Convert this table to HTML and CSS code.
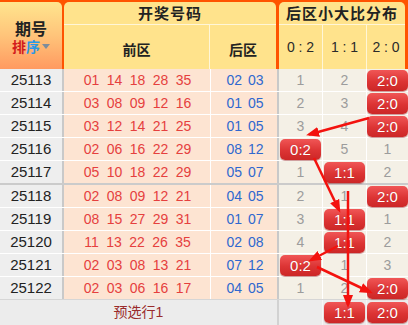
FILE: index.html
```html
<!DOCTYPE html>
<html lang="zh">
<head>
<meta charset="utf-8">
<title>后区小大比分布</title>
<link rel="stylesheet" href="styles.css">
</head>
<body>
<div class="board">
  <div class="head">
    <div class="h-qh">
      <div class="qh-title">期号</div>
      <div class="sort"><span class="s1">排</span><span class="s2">序</span><span class="tri"></span></div>
    </div>
    <div class="h-kj">
      <div class="h-title">开奖号码</div>
      <div class="h-sub">
        <div class="h-qq">前区</div>
        <div class="h-hq">后区</div>
      </div>
    </div>
    <div class="h-fb">
      <div class="h-title">后区小大比分布</div>
      <div class="h-sub">
        <div class="h-c">0 : 2</div>
        <div class="h-c">1 : 1</div>
        <div class="h-c last">2 : 0</div>
      </div>
    </div>
  </div>

  <div class="rows">
    <div class="row">
      <div class="c-qh">25113</div>
      <div class="c-qq"><span>01</span><span>14</span><span>18</span><span>28</span><span>35</span></div>
      <div class="c-hq"><span>02</span><span>03</span></div>
      <div class="c-r">1</div><div class="c-r">2</div><div class="c-r last"><span class="badge">2:0</span></div>
    </div>
    <div class="row">
      <div class="c-qh">25114</div>
      <div class="c-qq"><span>03</span><span>08</span><span>09</span><span>12</span><span>16</span></div>
      <div class="c-hq"><span>01</span><span>05</span></div>
      <div class="c-r">2</div><div class="c-r">3</div><div class="c-r last"><span class="badge">2:0</span></div>
    </div>
    <div class="row">
      <div class="c-qh">25115</div>
      <div class="c-qq"><span>03</span><span>12</span><span>14</span><span>21</span><span>25</span></div>
      <div class="c-hq"><span>01</span><span>05</span></div>
      <div class="c-r">3</div><div class="c-r">4</div><div class="c-r last"><span class="badge">2:0</span></div>
    </div>
    <div class="row">
      <div class="c-qh">25116</div>
      <div class="c-qq"><span>02</span><span>06</span><span>16</span><span>22</span><span>29</span></div>
      <div class="c-hq"><span>08</span><span>12</span></div>
      <div class="c-r"><span class="badge">0:2</span></div><div class="c-r">5</div><div class="c-r last">1</div>
    </div>
    <div class="row sep">
      <div class="c-qh">25117</div>
      <div class="c-qq"><span>05</span><span>10</span><span>18</span><span>22</span><span>29</span></div>
      <div class="c-hq"><span>05</span><span>07</span></div>
      <div class="c-r">1</div><div class="c-r"><span class="badge">1:1</span></div><div class="c-r last">2</div>
    </div>
    <div class="row">
      <div class="c-qh">25118</div>
      <div class="c-qq"><span>02</span><span>08</span><span>09</span><span>12</span><span>21</span></div>
      <div class="c-hq"><span>04</span><span>05</span></div>
      <div class="c-r">2</div><div class="c-r">1</div><div class="c-r last"><span class="badge">2:0</span></div>
    </div>
    <div class="row">
      <div class="c-qh">25119</div>
      <div class="c-qq"><span>08</span><span>15</span><span>27</span><span>29</span><span>31</span></div>
      <div class="c-hq"><span>01</span><span>07</span></div>
      <div class="c-r">3</div><div class="c-r"><span class="badge">1:1</span></div><div class="c-r last">1</div>
    </div>
    <div class="row">
      <div class="c-qh">25120</div>
      <div class="c-qq"><span>11</span><span>13</span><span>22</span><span>26</span><span>35</span></div>
      <div class="c-hq"><span>02</span><span>08</span></div>
      <div class="c-r">4</div><div class="c-r"><span class="badge">1:1</span></div><div class="c-r last">2</div>
    </div>
    <div class="row">
      <div class="c-qh">25121</div>
      <div class="c-qq"><span>02</span><span>03</span><span>08</span><span>13</span><span>21</span></div>
      <div class="c-hq"><span>07</span><span>12</span></div>
      <div class="c-r"><span class="badge">0:2</span></div><div class="c-r">1</div><div class="c-r last">3</div>
    </div>
    <div class="row end">
      <div class="c-qh">25122</div>
      <div class="c-qq"><span>02</span><span>03</span><span>06</span><span>16</span><span>17</span></div>
      <div class="c-hq"><span>04</span><span>05</span></div>
      <div class="c-r">1</div><div class="c-r">2</div><div class="c-r last"><span class="badge">2:0</span></div>
    </div>
  </div>

  <div class="foot">
    <div class="f-label">预选行1</div>
    <div class="f-c"></div>
    <div class="f-c"><span class="badge">1:1</span></div>
    <div class="f-c last"><span class="badge">2:0</span></div>
  </div>

  <svg class="arrows" width="408" height="325" viewBox="0 0 408 325">
    <defs>
      <marker id="ah" viewBox="0 0 13 10" refX="10" refY="5" markerWidth="13" markerHeight="10" markerUnits="userSpaceOnUse" orient="auto">
        <path d="M0,0 L13,5 L0,10 Z" fill="#f3120e"/>
      </marker>
    </defs>
    <g stroke="#f3120e" stroke-width="2.5" fill="none" marker-end="url(#ah)">
      <line x1="369" y1="118" x2="309" y2="134.5"/>
      <line x1="314" y1="158" x2="339" y2="210"/>
      <line x1="348" y1="191" x2="348" y2="305"/>
      <line x1="338" y1="246" x2="311" y2="260"/>
      <line x1="317" y1="267" x2="370" y2="292"/>
    </g>
  </svg>
</div>
</body>
</html>
```

FILE: styles.css
```css
* { box-sizing: border-box; }

html, body {
  margin: 0;
  padding: 0;
  background: #ffffff;
}

body {
  width: 408px;
  height: 325px;
  overflow: hidden;
  font-family: "Liberation Sans", "Noto Sans CJK SC", sans-serif;
}

.board {
  position: relative;
  width: 408px;
  height: 325px;
}

/* ---------- header ---------- */
.head {
  display: flex;
  height: 69px;
  padding-top: 2px;
  background: #ff5300;
}

.h-qh {
  width: 62px;
  margin-right: 2px;
  border-radius: 0 5px 0 0;
  background: linear-gradient(#ffe58e, #ffc47a 50%, #ff9a60);
  display: flex;
  flex-direction: column;
  align-items: center;
  justify-content: center;
  padding-top: 2px;
}

.qh-title {
  font-family: "Liberation Sans", "Noto Sans CJK SC", sans-serif;
  font-weight: 700;
  font-size: 16px;
  line-height: 20px;
  margin-top: 3px;
  margin-bottom: -3px;
  color: #222;
}

.sort {
  display: flex;
  align-items: center;
  font-family: "Liberation Sans", "Noto Sans CJK SC", sans-serif;
  font-weight: 700;
  font-size: 14px;
  line-height: 20px;
}

.s1 { color: #d21c1c; }
.s2 { color: #2a98e6; }

.tri {
  width: 0;
  height: 0;
  margin-left: 2px;
  border-left: 4px solid transparent;
  border-right: 4px solid transparent;
  border-top: 5px solid #7d8c9c;
}

.h-kj {
  width: 212px;
  margin-right: 3px;
  border-radius: 5px 5px 0 0;
  background: #ffe38c;
  display: flex;
  flex-direction: column;
}

.h-fb {
  width: 126px;
  border-radius: 5px 5px 0 0;
  background: #ffe38c;
  display: flex;
  flex-direction: column;
}

.h-title {
  height: 23px;
  border-bottom: 1px solid #fff6d8;
  font-family: "Noto Sans CJK SC", sans-serif;
  font-weight: 700;
  font-size: 15px;
  letter-spacing: 1px;
  line-height: 22px;
  text-align: center;
  color: #222;
}

.h-sub {
  flex: 1;
  display: flex;
}

.h-qq, .h-hq {
  display: flex;
  align-items: center;
  justify-content: center;
  font-family: "Noto Sans CJK SC", sans-serif;
  font-weight: 700;
  font-size: 14px;
  color: #222;
  padding-top: 3px;
}

.h-qq {
  width: 146px;
  border-right: 1px solid #fff6d8;
}

.h-hq { flex: 1; }

.h-c {
  width: 44px;
  border-right: 1px solid #fff6d8;
  display: flex;
  align-items: center;
  justify-content: center;
  font-size: 14px;
  color: #2a2a2a;
}

.h-c.last {
  flex: 1;
  border-right: 0;
}

/* ---------- rows ---------- */
.row {
  display: grid;
  grid-template-columns: 64px 147px 68px 44px 44px 41px;
  height: 23px;
  border-bottom: 1px solid #ffffff;
}

.row.sep {
  height: 24px;
  border-bottom: 2px solid #cbcbcb;
}

.row.end {
  border-bottom: 1px solid #d6d6d6;
}

.c-qh {
  background: #eeeeee;
  border-right: 2px solid #c9c9c9;
  font-size: 15px;
  line-height: 22px;
  color: #222;
  text-align: center;
}

.c-qq, .c-hq {
  background: #fde4d2;
  display: flex;
  justify-content: center;
  font-size: 14px;
  line-height: 22px;
}

.c-qq {
  gap: 7.4px;
  color: #e5403e;
  border-right: 1px solid #ffffff;
  padding-left: 1px;
}

.c-hq {
  gap: 6px;
  color: #2f68cf;
  border-right: 2px solid #c9c9c9;
  padding-left: 2px;
}

.c-r {
  background: #f4f0e6;
  border-right: 1px solid #ffffff;
  display: flex;
  justify-content: center;
  align-items: flex-start;
  font-size: 14px;
  line-height: 22px;
  color: #9c9c9c;
}

.c-r.last { border-right: 0; }

.badge {
  display: block;
  width: 41px;
  height: 21px;
  margin-top: 1px;
  border-radius: 5px;
  background: linear-gradient(#f05656, #dc3434 55%, #cc2727);
  box-shadow: 0 1px 1px rgba(140, 20, 20, 0.45);
  color: #ffffff;
  font-size: 15px;
  line-height: 21px;
  text-align: center;
  text-shadow: 0 0 1px rgba(120, 0, 0, 0.4);
}

/* ---------- footer ---------- */
.foot {
  display: grid;
  grid-template-columns: 279px 44px 44px 41px;
  height: 25px;
  background: #ececec;
}

.f-label {
  border-right: 2px solid #d2d2d2;
  font-size: 14px;
  line-height: 24px;
  color: #9a2b2b;
  text-align: center;
}

.f-c {
  border-right: 1px solid #f6f6f6;
  display: flex;
  justify-content: center;
  padding-top: 1px;
}

.f-c.last { border-right: 0; }

/* ---------- overlay arrows ---------- */
.arrows {
  position: absolute;
  left: 0;
  top: 0;
  pointer-events: none;
}
```
